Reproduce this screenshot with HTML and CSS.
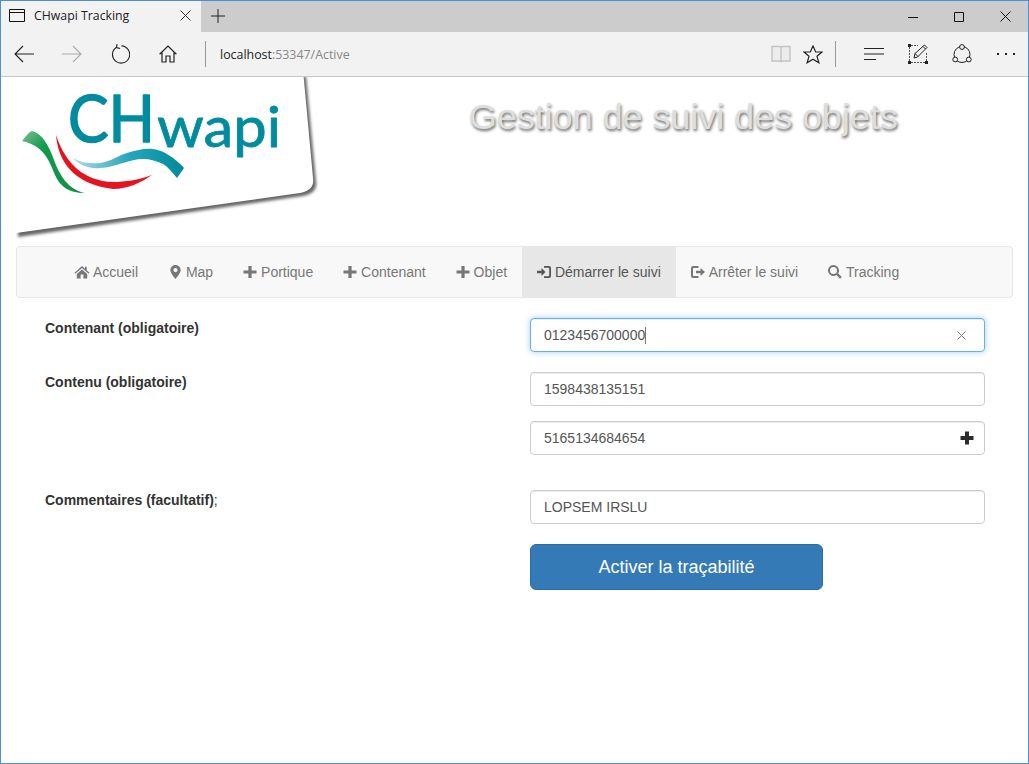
FILE: index.html
```html
<!DOCTYPE html>
<html lang="en">
<head>
    <meta charset="UTF-8">
    <meta name="viewport" content="width=device-width, initial-scale=1.0">
    <title>CHwapi Tracking</title>
    <link rel="stylesheet" href="styles.css">
</head>
<body>
<div class="window">
    <!-- Browser tabs -->
    <div class="tabbar">
        <div class="tab">
            <svg class="tab-icon" width="16" height="14" viewBox="0 0 16 14"><path d="M.5.5h15v12h-15zM.5 3.500h15" fill="none" stroke="#111"/></svg>
            <span class="tab-title">CHwapi Tracking</span>
            <svg class="tab-close" width="11" height="11" viewBox="0 0 11 11"><path d="M.5.5l10 10M10.500.5l-10 10" stroke="#333" fill="none"/></svg>
        </div>
        <div class="tab-new">
            <svg width="14" height="14" viewBox="0 0 14 14"><path d="M7 0v14M0 7h14" stroke="#222" fill="none"/></svg>
        </div>
        <div class="winctl">
            <span class="winbtn"><svg width="10" height="10" viewBox="0 0 10 10"><path d="M0 5.500h10" stroke="#111"/></svg></span>
            <span class="winbtn"><svg width="10" height="10" viewBox="0 0 10 10"><path d="M.5.5h9v9h-9z" stroke="#111" fill="none"/></svg></span>
            <span class="winbtn"><svg width="11" height="11" viewBox="0 0 11 11"><path d="M.5.5l10 10M10.500.5l-10 10" stroke="#111" fill="none"/></svg></span>
        </div>
    </div>

    <!-- Browser toolbar -->
    <div class="toolbar">
        <span class="tool back"><svg width="20" height="18" viewBox="0 0 20 18"><path d="M20 9H1M9 1L1 9l8 8" fill="none" stroke="#222" stroke-width="1.100"/></svg></span>
        <span class="tool"><svg width="20" height="18" viewBox="0 0 20 18"><path d="M0 9h19M11 1l8 8-8 8" fill="none" stroke="#aaa" stroke-width="1.100"/></svg></span>
        <span class="tool"><svg width="19" height="20" viewBox="0 0 19 20"><path d="M5.500 3.200A8.600 8.600 0 1 0 10.500 1.900M6 .2L5.500 3.600l3.600 .9" fill="none" stroke="#222" stroke-width="1.100"/></svg></span>
        <span class="tool"><svg width="18" height="18" viewBox="0 0 18 18"><path d="M.6 9.200L9 1l8.400 8.200M3 7.500V17h4v-6h4v6h4V7.500" fill="none" stroke="#222" stroke-width="1.200"/></svg></span>
        <span class="tool-sep first"></span>
        <span class="address"><span class="host">localhost</span>:53347/Active</span>
        <span class="tool narrow"><svg width="20" height="18" viewBox="0 0 20 18"><path d="M1 1.500h8l1 1 1-1h8V16h-8l-1 1-1-1H1zM10 2.500V17" fill="#ececec" stroke="#c4c4c4" stroke-width="1.400"/></svg></span>
        <span class="tool narrow"><svg width="20" height="19" viewBox="0 0 20 19"><path d="M10 1l2.700 6h6.300l-5 4.300 1.900 6.500L10 14.200l-5.900 3.600L6 11.300 1 7h6.300z" fill="none" stroke="#222" stroke-width="1.200"/></svg></span>
        <span class="tool-sep last"></span>
        <span class="tool small"><svg width="20" height="14" viewBox="0 0 20 14"><path d="M0 1.500h20M0 7h20M0 12.500h12" stroke="#222" fill="none"/></svg></span>
        <span class="tool small"><svg width="20" height="20" viewBox="0 0 20 20"><path d="M1.500 3v14M3 18.500h14M18.500 9v8M3 1.500h7" stroke="#555" stroke-dasharray="2 1" fill="none"/><path d="M0 0h3v3H0zM0 17h3v3H0zM17 17h3v3h-3z" fill="#222"/><path d="M6 14l1-4.500L16.500 1l2.500 2.500-9.500 9.500zM7 9.500l3 3M15 2.500l2.500 2.500" fill="#f2f2f2" stroke="#222"/></svg></span>
        <span class="tool small"><svg width="20" height="20" viewBox="0 0 20 20"><circle cx="10" cy="10.500" r="8" fill="none" stroke="#222"/><circle cx="10" cy="3" r="2.400" fill="#f2f2f2" stroke="#222"/><circle cx="3.200" cy="15.500" r="2.400" fill="#f2f2f2" stroke="#222"/><circle cx="16.800" cy="15.500" r="2.400" fill="#f2f2f2" stroke="#222"/></svg></span>
        <span class="tool small"><svg width="18" height="4" viewBox="0 0 18 4"><path d="M0 1h2v2H0zM8 1h2v2H8zM16 1h2v2h-2z" fill="#222"/></svg></span>
    </div>

    <div class="page">
        <header class="masthead">
            <svg class="logo" width="330" height="169" viewBox="1 77 330 169">
                <defs>
                    <filter id="soft" x="-10%" y="-10%" width="120%" height="120%"><feGaussianBlur stdDeviation="1.500"/></filter>
                    <linearGradient id="green" x1="0" y1="0" x2="1" y2="1">
                        <stop offset="0" stop-color="#7cc08f"/>
                        <stop offset=".3" stop-color="#109a4c"/>
                        <stop offset="1" stop-color="#0f8f45"/>
                    </linearGradient>
                    <linearGradient id="wave" x1="0" y1="0" x2="1" y2="0">
                        <stop offset="0" stop-color="#b4dbe6"/>
                        <stop offset=".5" stop-color="#28a6bd"/>
                        <stop offset="1" stop-color="#008a99"/>
                    </linearGradient>
                </defs>
                <path d="M18 76H306L316 181Q318 193 303 196L18 237z" fill="#666" filter="url(#soft)"/>
                <path d="M0 70H303L313 178Q315 190 300 193L16 233H0z" fill="#fff"/>
                <path d="M22 141C26 136 29 132 32 131 42 133 49 146 54 160 59 174 68 190 85 193 68 193 60 186 55 175 49 160 44 146 22 141z" fill="url(#green)"/>
                <path d="M56 135C58 160 72 184 113 189 128 189 142 182 152 175 138 180 125 182 113 182 85 181 66 165 56 135z" fill="#e3141f"/>
                <path d="M73 158C82 163 91 164 100 163 110 162 119 155 127 153 137 150 145 148 153 149 163 150 175 158 184 168L177 178C172 172 168 167 163 164 157 161 150 159 143 159 136 159 130 161 123 163 115 165 108 168 100 168 90 169 80 166 73 158z" fill="url(#wave)"/>
                <text class="logo-big" x="68" y="142" textLength="87" lengthAdjust="spacingAndGlyphs">CH</text>
                <text class="logo-small" x="157" y="146.500" textLength="124" lengthAdjust="spacingAndGlyphs">wapi</text>
            </svg>
            <h1 class="site-title">Gestion de suivi des objets</h1>
        </header>

        <nav class="navbar">
            <a class="nav-link" href="#"><svg class="glyph" viewBox="0 0 14 14"><path d="M7 1L-.5 7.800l.8 .9L7 2.900l6.700 5.800 .8-.9L11.700 5.300V1.800H9.900v1.900zM1.800 9v4.500h3.800V9.500h2.800v4h3.800V9L7 4.500z"/></svg>Accueil</a>
            <a class="nav-link" href="#"><svg class="glyph" viewBox="0 0 14 14"><path fill-rule="evenodd" d="M7.500 0a5.200 5.200 0 0 0-5.200 5C2.300 8.300 7.500 14 7.500 14s5.200-5.700 5.200-9a5.200 5.200 0 0 0-5.200-5zm0 3a2.100 2.100 0 1 1 0 4.200 2.100 2.100 0 0 1 0-4.200z"/></svg>Map</a>
            <a class="nav-link" href="#"><svg class="glyph" viewBox="0 0 14 14"><path d="M5.400 1h3.200v4.400H13.500v3.200H8.600V13H5.400V8.600H.5V5.400h4.900z"/></svg>Portique</a>
            <a class="nav-link" href="#"><svg class="glyph" viewBox="0 0 14 14"><path d="M5.400 1h3.200v4.400H13.500v3.200H8.600V13H5.400V8.600H.5V5.400h4.900z"/></svg>Contenant</a>
            <a class="nav-link" href="#"><svg class="glyph" viewBox="0 0 14 14"><path d="M5.400 1h3.200v4.400H13.500v3.200H8.600V13H5.400V8.600H.5V5.400h4.900z"/></svg>Objet</a>
            <a class="nav-link active" href="#"><svg class="glyph" viewBox="0 0 14 14"><path d="M0 5.700h4.500V3l4 4-4 4V8.300H0zM7 1h5a2 2 0 0 1 2 2v8a2 2 0 0 1-2 2H7v-1.800h4.400c.5 0 .8-.3.800-.8V3.600c0-.5-.3-.8-.8-.8H7z"/></svg>Démarrer le suivi</a>
            <a class="nav-link" href="#"><svg class="glyph" viewBox="0 0 14 14"><path d="M7.500 1H2a2 2 0 0 0-2 2v8a2 2 0 0 0 2 2h5.500v-2H2.600c-.4 0-.6-.2-.6-.6V3.600c0-.4.200-.6.600-.6h4.900zM5 5.700h4.500V3l4.500 4-4.500 4V8.300H5z"/></svg>Arrêter le suivi</a>
            <a class="nav-link" href="#"><svg class="glyph" viewBox="0 0 14 14"><path fill-rule="evenodd" d="M5.500 0a5.500 5.500 0 1 0 3 10.100l3.500 3.600 1.800-1.800-3.600-3.500A5.500 5.500 0 0 0 5.500 0zm0 2a3.500 3.500 0 1 1 0 7 3.500 3.500 0 0 1 0-7z"/></svg>Tracking</a>
        </nav>

        <form class="track-form">
            <label class="form-label">Contenant (obligatoire)</label>
            <div class="field">
                <input class="form-control is-focus" type="text" value="0123456700000">
                <span class="caret"></span>
                <svg class="field-clear" width="9" height="9" viewBox="0 0 9 9"><path d="M.5.5l8 8M8.500.5l-8 8" stroke="#777" fill="none"/></svg>
            </div>

            <label class="form-label">Contenu (obligatoire)</label>
            <div class="field-stack">
                <div class="field"><input class="form-control" type="text" value="1598438135151"></div>
                <div class="field">
                    <input class="form-control" type="text" value="5165134684654">
                    <svg class="field-add" width="14" height="14" viewBox="0 0 14 14"><path d="M5 .5h4v4.500h4.500v4H9v4.500H5V9H.5V5H5z" fill="#2b2b2b"/></svg>
                </div>
            </div>

            <label class="form-label comment-label"><b>Commentaires (facultatif)</b>;</label>
            <div class="field comment-field"><input class="form-control" type="text" value="LOPSEM IRSLU"></div>

            <span></span>
            <button class="btn-primary" type="button">Activer la traçabilité</button>
        </form>
    </div>
</div>
</body>
</html>
```

FILE: styles.css
```css
* {
    box-sizing: border-box;
}
body {
    margin: 0;
    font-family: "Liberation Sans", Arial, sans-serif;
    font-size: 14px;
    color: #333;
    background-color: #fff;
}
.window {
    display: flex;
    flex-direction: column;
    height: 764px;
    border: 1px solid #4a90d9;
    overflow: hidden;
}

/* Browser chrome */
.tabbar {
    display: flex;
    flex: none;
    height: 31px;
    background-color: #cccccc;
}
.tab {
    display: flex;
    align-items: center;
    width: 200px;
    padding: 0 10px 2px 8px;
    background-color: #f2f2f2;
}
.tab-title {
    margin-left: 9px;
    font-family: "Open Sans", sans-serif;
    font-size: 12.3px;
    color: #222;
}
.tab-close {
    margin-left: auto;
}
.tab-new {
    display: flex;
    align-items: center;
    padding: 0 0 1px 10px;
}
.winctl {
    display: flex;
    margin-left: auto;
}
.winbtn {
    display: flex;
    align-items: center;
    justify-content: center;
    width: 46px;
}
.toolbar {
    display: flex;
    flex: none;
    align-items: center;
    height: 45px;
    background-color: #f2f2f2;
    border-bottom: 1px solid #c8c8c8;
}
.tool {
    display: flex;
    align-items: center;
    justify-content: center;
    width: 48px;
}
.tool.back {
    margin-left: -1px;
}
.tool.small {
    width: 44px;
}
.tool.narrow {
    width: 32px;
}
.tool-sep {
    width: 1px;
    height: 26px;
    background-color: #999;
}
.tool-sep.first {
    margin-left: 13px;
}
.tool-sep.last {
    margin: 0 16px 0 6px;
}
.address {
    flex: 1;
    margin-left: 14px;
    font-family: "Open Sans", sans-serif;
    font-size: 12.4px;
    color: #888;
}
.host {
    color: #222;
}

/* Page header */
.page {
    flex: 1;
    background-color: #fff;
}
.masthead {
    display: flex;
    height: 169px;
}
.logo {
    flex: none;
}
.site-title {
    margin: 19px 0 0 138px;
    font-size: 35.9px;
    font-weight: 400;
    line-height: 42px;
    color: #dedede;
    text-shadow: 1px 2px 3px #666;
}
.logo-big {
    font-family: Lato, sans-serif;
    font-size: 65px;
    fill: #008c9e;
    stroke: #008c9e;
    stroke-width: 1.5px;
    stroke-linejoin: round;
}
.logo-small {
    font-family: Lato, sans-serif;
    font-size: 56px;
    fill: #008c9e;
    stroke: #008c9e;
    stroke-width: 0.8px;
    stroke-linejoin: round;
}

/* Nav */
.navbar {
    display: flex;
    height: 52px;
    margin: 0 15px;
    padding-left: 43px;
    background-color: #f8f8f8;
    border: 1px solid #e7e7e7;
    border-radius: 4px;
}
.nav-link {
    display: flex;
    align-items: center;
    padding: 0 15px;
    color: #777;
    text-decoration: none;
}
.nav-link.active {
    color: #555;
    background-color: #e7e7e7;
}
.glyph {
    flex: none;
    width: 14px;
    height: 14px;
    margin-right: 3.9px;
    fill: currentColor;
    overflow: visible;
}

/* Form */
.track-form {
    display: grid;
    grid-template-columns: 485px 455px;
    padding: 20px 0 0 44px;
}
.form-label {
    padding-top: 3px;
    font-size: 14px;
    font-weight: bold;
    line-height: 15px;
    margin-bottom: 20px;
}
.comment-label {
    font-weight: normal;
    margin: 0;
}
.field {
    position: relative;
    margin-bottom: 20px;
}
.field-stack .field:first-child {
    margin-bottom: 15px;
}
.field-stack .field:last-child {
    margin-bottom: 35px;
}
.form-control {
    display: block;
    width: 100%;
    height: 34px;
    padding: 6px 13px;
    font: 14px "Liberation Sans", Arial, sans-serif;
    color: #555;
    background-color: #fff;
    border: 1px solid #ccc;
    border-radius: 4px;
    box-shadow: inset 0 1px 1px rgba(0, 0, 0, 0.075);
    outline: none;
}
.form-control.is-focus {
    border-color: #66afe9;
    box-shadow: inset 0 1px 1px rgba(0, 0, 0, 0.075), 0 0 6px rgba(102, 175, 233, 0.6);
}
.caret {
    position: absolute;
    left: 115px;
    top: 9px;
    width: 1px;
    height: 17px;
    background-color: #777;
}
.field-clear {
    position: absolute;
    right: 19px;
    top: 13px;
}
.field-add {
    position: absolute;
    right: 11px;
    top: 10px;
}
.btn-primary {
    width: 293px;
    height: 46px;
    font: 18px "Liberation Sans", Arial, sans-serif;
    color: #fff;
    background-color: #337ab7;
    border: 1px solid #2e6da4;
    border-radius: 6px;
}
```
